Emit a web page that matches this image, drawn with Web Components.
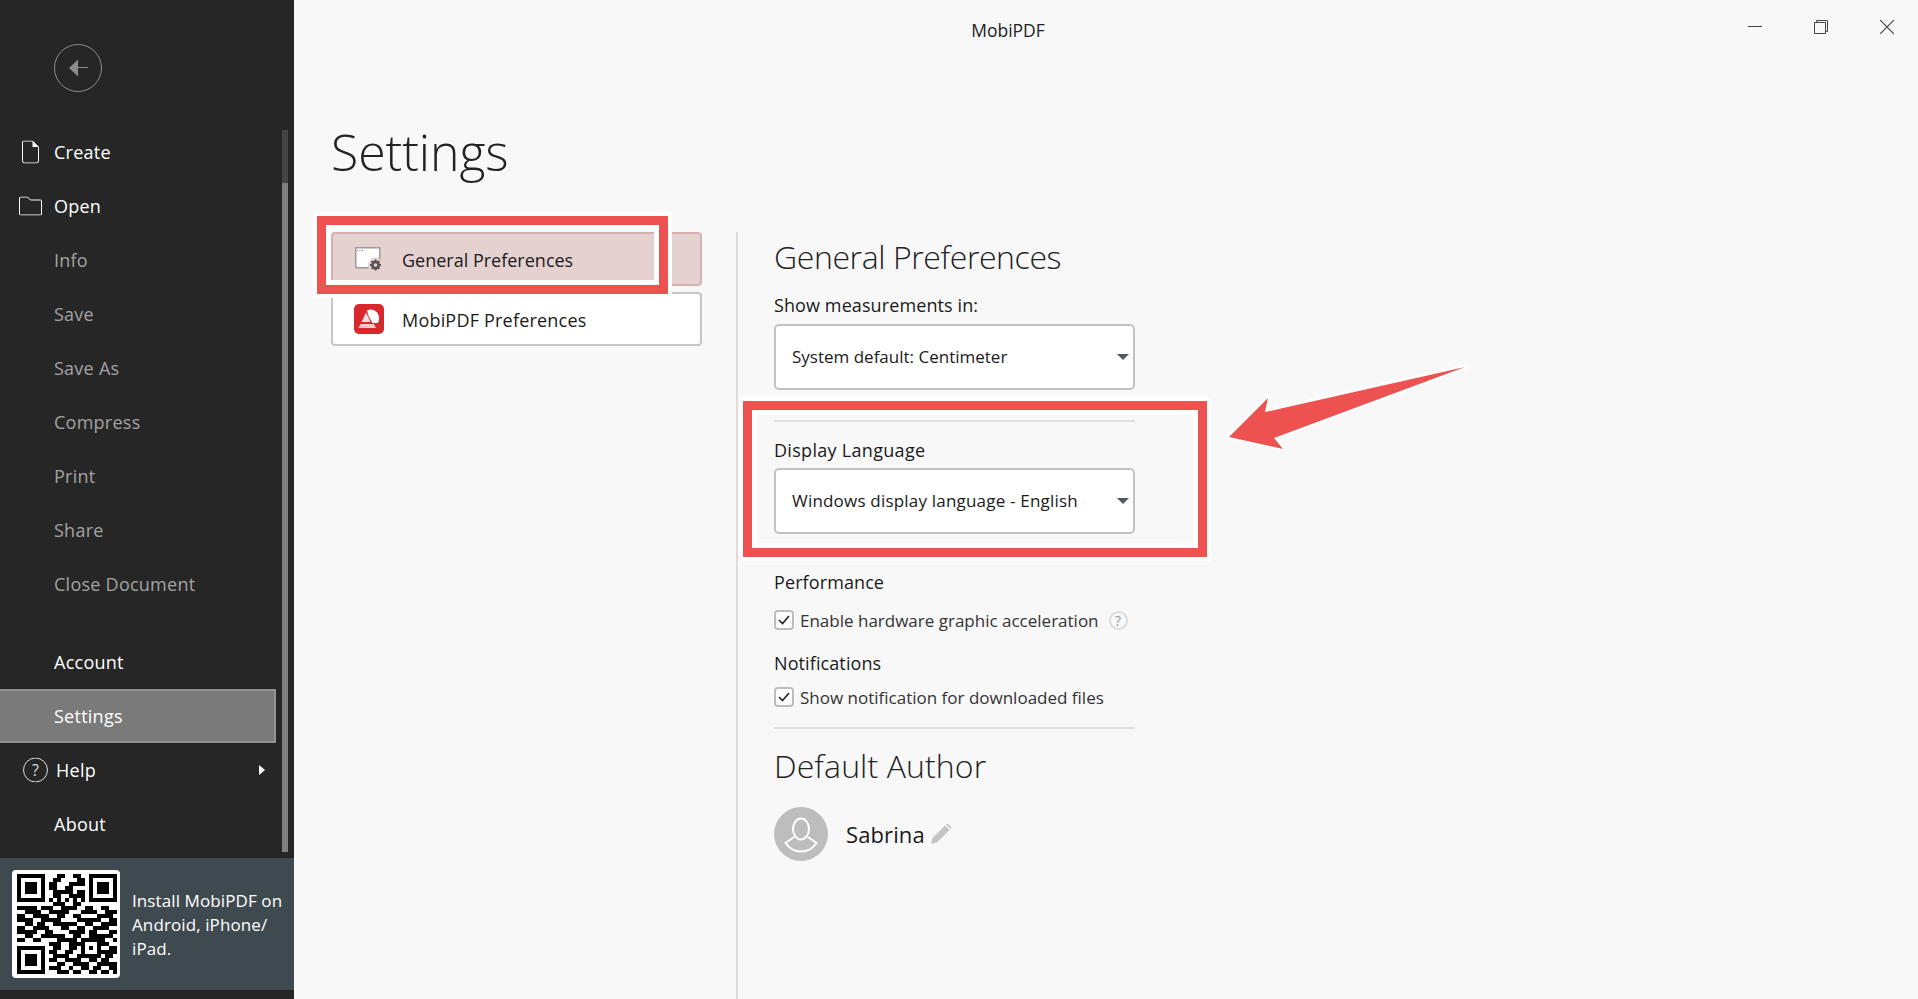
<!DOCTYPE html>
<html>
<head>
<meta charset="utf-8">
<title>MobiPDF</title>
<style>
  html, body { margin: 0; height: 100%; overflow: hidden; }
  body { font-family: "Open Sans", "Noto Sans", sans-serif; }
</style>
</head>
<body>
<settings-app></settings-app>
<script>
const FONT = '"Open Sans", "Noto Sans", sans-serif';

class NavItem extends HTMLElement {
  constructor() {
    super();
    this.attachShadow({ mode: 'open' }).innerHTML = `
      <style>
        :host { display: flex; align-items: center; height: 54px; box-sizing: border-box; padding-left: 54px; position: relative; color: #fff; font-size: 18px; letter-spacing: .25px; }
        :host([dim]) { color: #a3a3a3; }
        :host([active]) { background: #7a7a7a; border: 2px solid #929292; border-left: 0; width: 276px; }
        .icon { position: absolute; left: 17px; top: 50%; transform: translateY(-50%); display: flex; }
      </style>
      <span class="icon"><slot name="icon"></slot></span>
      <slot></slot>
      <slot name="after"></slot>`;
  }
}
customElements.define('nav-item', NavItem);

const QR = [
  '1111111000110011001111111',
  '1000001001100001101000001',
  '1011101011000111101011101',
  '1011101011001100001011101',
  '1011101001111101101011101',
  '1000001001100111101000001',
  '1111111010101010101111111',
  '0000000001110011000000000',
  '1111101110011110011001100',
  '0011110011111000111100111',
  '1100111100110011000011110',
  '1111001111100001111110011',
  '0011011001111110011001111',
  '1100111100011001100111100',
  '1111100110000111101100011',
  '0011001111110011001111110',
  '1100110000111110111111001',
  '0000000011100111100011100',
  '1111111001100110101010011',
  '1000001011001100100011111',
  '1011101001111001111110110',
  '1011101011001111001101100',
  '1011101000110011110011111',
  '1000001011100100110110011',
  '1111111000111011001101101'
];

class QrCode extends HTMLElement {
  constructor() {
    super();
    let d = '';
    QR.forEach((row, y) => {
      [...row].forEach((c, x) => { if (c === '1') d += `M${x} ${y}h1v1h-1z`; });
    });
    this.attachShadow({ mode: 'open' }).innerHTML = `
      <style>
        :host { display: block; width: 108px; height: 108px; box-sizing: border-box; padding: 4px 0 0 5px; background: #fff; border-radius: 4px; flex: none; }
        svg { display: block; }
      </style>
      <svg width="100" height="100" viewBox="0 0 25 25" shape-rendering="crispEdges"><path d="${d}" fill="#000"/></svg>`;
  }
}
customElements.define('qr-code', QrCode);

class SideBar extends HTMLElement {
  constructor() {
    super();
    this.attachShadow({ mode: 'open' }).innerHTML = `
      <style>
        :host { display: flex; flex-direction: column; width: 294px; flex: none; height: 999px; background: #262626; font-family: ${FONT}; position: relative; }
        .back { padding: 44px 0 0 54px; height: 81px; }
        .items { flex: none; height: 733px; }
        .gap { height: 24px; }
        .track { position: absolute; left: 282px; top: 130px; width: 6px; height: 53px; background: #444; }
        .thumb { position: absolute; left: 282px; top: 183px; width: 6px; height: 669px; background: #808080; }
        .promo { height: 132px; background: #3f4a50; display: flex; align-items: center; gap: 12px; padding-left: 12px; color: #fff; font-size: 17px; line-height: 24px; letter-spacing: .1px; box-sizing: border-box; }
        .promo span { width: 166px; padding-top: 1px; }
      </style>
      <div class="back">
        <svg width="48" height="48" viewBox="0 0 48 48" fill="none">
          <circle cx="24" cy="24" r="23.5" stroke="#8c8c8c"/>
          <path d="M15 24l9-8.500v17z" fill="#8c8c8c"/>
          <path d="M23 23.500h11" stroke="#8c8c8c"/>
        </svg>
      </div>
      <div class="items">
        <nav-item>Create
          <svg slot="icon" width="17" height="23" viewBox="0 0 17 23" fill="none" style="margin-left:5px"><path d="M1.500.5H10.500L16.500 6.500V20.500a2 2 0 0 1-2 2H2.500a2 2 0 0 1-2-2V1.500a1 1 0 0 1 1-1z" stroke="#fff"/><path d="M10.500.5L16.500 6.500H10.500z" fill="#fff"/></svg>
        </nav-item>
        <nav-item>Open
          <svg slot="icon" width="23" height="19" viewBox="0 0 23 19" fill="none" style="margin-left:2px"><path d="M1.500.5H8.500L11.500 3.500H21.500a1 1 0 0 1 1 1V17.500a1 1 0 0 1-1 1H1.500a1 1 0 0 1-1-1V1.500a1 1 0 0 1 1-1z" stroke="#fff"/></svg>
        </nav-item>
        <nav-item dim>Info</nav-item>
        <nav-item dim>Save</nav-item>
        <nav-item dim>Save As</nav-item>
        <nav-item dim>Compress</nav-item>
        <nav-item dim>Print</nav-item>
        <nav-item dim>Share</nav-item>
        <nav-item dim>Close Document</nav-item>
        <div class="gap"></div>
        <nav-item>Account</nav-item>
        <nav-item active>Settings</nav-item>
        <nav-item style="padding-left:56px">Help
          <svg slot="icon" width="25" height="25" viewBox="0 0 25 25" fill="none" style="margin-left:6px"><circle cx="12.500" cy="12.500" r="12" stroke="#ddd"/><text x="12.500" y="18" text-anchor="middle" font-size="16" fill="#ddd" font-family="Open Sans">?</text></svg>
          <i slot="after" style="position:absolute;right:29px;top:50%;margin-top:-5px;width:0;height:0;border-left:6px solid #fff;border-top:5.500px solid transparent;border-bottom:5.500px solid transparent"></i>
        </nav-item>
        <nav-item>About</nav-item>
      </div>
      <div class="promo"><qr-code></qr-code><span>Install MobiPDF on Android, iPhone/ iPad.</span></div>
      <i class="track"></i><i class="thumb"></i>`;
  }
}
customElements.define('side-bar', SideBar);

class TitleBar extends HTMLElement {
  constructor() {
    super();
    this.attachShadow({ mode: 'open' }).innerHTML = `
      <style>
        :host { display: flex; height: 60px; align-items: flex-start; color: #222; }
        .title { flex: 1; text-align: center; font-size: 17.500px; line-height: 60px; }
        .btns { display: flex; margin-right: -2px; }
        .btns div { width: 66px; height: 54px; display: flex; align-items: center; justify-content: center; }
      </style>
      <div class="title">MobiPDF</div>
      <div class="btns">
        <div><svg width="14" height="14" viewBox="0 0 14 14"><path d="M0 6.500h14" stroke="#444"/></svg></div>
        <div><svg width="14" height="14" viewBox="0 0 14 14" fill="none"><path d="M.5 2.500h11v11H.5z M2.500 2.500V.5h11v11h-2" stroke="#444"/></svg></div>
        <div><svg width="14" height="14" viewBox="0 0 14 14"><path d="M0 0l14 14M14 0L0 14" stroke="#444" stroke-width="1.200"/></svg></div>
      </div>`;
  }
}
customElements.define('title-bar', TitleBar);

class PrefTab extends HTMLElement {
  constructor() {
    super();
    this.attachShadow({ mode: 'open' }).innerHTML = `
      <style>
        :host { display: flex; align-items: center; box-sizing: border-box; width: 371px; height: 54px; border: 2px solid #c6c6c6; border-radius: 4px; background: #fff; font-size: 18px; color: #1a1a1a; }
        :host([selected]) { background: #e6d1d1; border-color: #d9b0b0; }
        .icon { width: 69px; padding-left: 22px; box-sizing: border-box; display: flex; flex: none; }
        .text { padding-top: 2px; }
      </style>
      <span class="icon"><slot name="icon"></slot></span>
      <span class="text"><slot></slot></span>`;
  }
}
customElements.define('pref-tab', PrefTab);

class DropDown extends HTMLElement {
  constructor() {
    super();
    this.attachShadow({ mode: 'open' }).innerHTML = `
      <style>
        :host { display: flex; align-items: center; box-sizing: border-box; width: 361px; height: 66px; padding: 0 0 2px 16px; background: #fff; border: 2px solid #c2c2c2; border-radius: 5px; position: relative; font-size: 17px; color: #1a1a1a; }
        i { position: absolute; right: 4px; top: 28px; border-top: 6px solid #4d5a66; border-left: 6px solid transparent; border-right: 6px solid transparent; }
      </style>
      <slot></slot><i></i>`;
  }
}
customElements.define('drop-down', DropDown);

class CheckRow extends HTMLElement {
  constructor() {
    super();
    this.attachShadow({ mode: 'open' }).innerHTML = `
      <style>
        :host { display: flex; align-items: center; gap: 6px; height: 28px; font-size: 17px; color: #333; }
        .box { width: 16px; height: 16px; border: 2px solid #bdbdbd; border-radius: 4px; background: #fff; display: flex; align-items: center; justify-content: center; flex: none; }
      </style>
      <span class="box"><svg width="12" height="10" viewBox="0 0 12 10" fill="none"><path d="M1 5l3.500 3.500L11 1" stroke="#222" stroke-width="1.600"/></svg></span>
      <slot></slot>
      <slot name="after"></slot>`;
  }
}
customElements.define('check-row', CheckRow);

class GeneralPane extends HTMLElement {
  constructor() {
    super();
    this.attachShadow({ mode: 'open' }).innerHTML = `
      <style>
        :host { display: block; width: 361px; padding-left: 36px; border-left: 2px solid #dcdcdc; color: #1a1a1a; flex: none; }
        h2 { margin: 0; font-weight: 300; font-size: 32px; line-height: 44px; letter-spacing: -.4px; color: #222; }
        .label { font-size: 18px; line-height: 24px; letter-spacing: .1px; }
        hr { border: 0; border-top: 2px solid #e0e0e0; margin: 0; }
        .author { display: flex; align-items: center; margin-top: 19px; font-size: 22px; letter-spacing: .1px; }
      </style>
      <h2 style="margin-top:3px">General Preferences</h2>
      <div class="label" style="margin-top:14px">Show measurements in:</div>
      <drop-down style="margin-top:7px">System default: Centimeter</drop-down>
      <hr style="margin-top:30px">
      <div class="label" style="margin-top:16px;letter-spacing:.3px">Display Language</div>
      <drop-down style="margin-top:6px;letter-spacing:.2px">Windows display language - English</drop-down>
      <div class="label" style="margin-top:36px">Performance</div>
      <check-row style="margin-top:12px">Enable hardware graphic acceleration<span slot="after" style="box-sizing:border-box;width:19px;height:19px;border:2px solid #dcdcdc;border-radius:50%;color:#9a9a9a;font-size:14px;line-height:15px;text-align:center;margin-left:4px">?</span></check-row>
      <div class="label" style="margin-top:17px">Notifications</div>
      <check-row style="margin-top:8px">Show notification for downloaded files</check-row>
      <hr style="margin-top:16px">
      <h2 style="margin-top:15px;letter-spacing:.1px">Default Author</h2>
      <div class="author">
        <svg width="54" height="54" viewBox="0 0 54 54" fill="none">
          <circle cx="27" cy="27" r="27" fill="#bdbdbd"/>
          <ellipse cx="27" cy="22" rx="8" ry="10.500" stroke="#fff" stroke-width="2"/>
          <path d="M20 30l-8.500 6c4 6 9.500 8.500 15.500 8.500s11.500-2.500 15.500-8.500l-8.500-6" stroke="#fff" stroke-width="2"/>
        </svg>
        <span style="margin-left:18px">Sabrina</span>
        <svg width="22" height="22" viewBox="0 0 22 22" style="margin-left:5px"><path d="M1 21l1.500-6L15 2.500l4.500 4.500L7 19.500z M16 1.500l1.500-1 4 4-1 1.500z" fill="#c4c4c4"/></svg>
      </div>`;
  }
}
customElements.define('general-pane', GeneralPane);

class MarkBox extends HTMLElement {
  constructor() {
    super();
    this.attachShadow({ mode: 'open' }).innerHTML = `
      <style>
        :host { position: absolute; box-sizing: border-box; border: 9px solid #ee5250; outline: 4px solid #fff; pointer-events: none; }
        i { position: absolute; inset: 0; border: 5px solid #fff; }
      </style><i></i>`;
  }
}
customElements.define('mark-box', MarkBox);

class SettingsApp extends HTMLElement {
  constructor() {
    super();
    this.attachShadow({ mode: 'open' }).innerHTML = `
      <style>
        :host { display: flex; width: 1918px; height: 999px; background: #f8f8f8; font-family: ${FONT}; position: relative; overflow: hidden; }
        main { flex: 1; display: flex; flex-direction: column; min-width: 0; }
        h1 { margin: 56px 0 0 37px; font-weight: 300; font-size: 50px; line-height: 72px; letter-spacing: -.1px; color: #222; }
        .body { display: flex; flex: 1; margin: 44px 0 0 37px; gap: 34px; }
        .tabs { display: flex; flex-direction: column; gap: 6px; }
      </style>
      <side-bar></side-bar>
      <main>
        <title-bar></title-bar>
        <h1>Settings</h1>
        <div class="body">
          <div class="tabs">
            <pref-tab selected>General Preferences
              <svg slot="icon" width="28" height="25" viewBox="0 0 28 25" fill="none">
                <path d="M.75.75h24v20h-24z" fill="#fff" stroke="#9a9a9a" stroke-width="1.500"/>
                <path d="M2 3.500h1M4.500 3.500h1M7 3.500h1" stroke="#777"/>
                <circle cx="20.500" cy="18" r="7.500" fill="#e6d1d1"/>
                <circle cx="20.500" cy="18" r="4.500" fill="#555"/>
                <path d="M20.500 12.500v11M15 18h11M16.600 14.100l7.800 7.800M24.400 14.100l-7.800 7.800" stroke="#555" stroke-width="2"/>
                <circle cx="20.500" cy="18" r="1.800" fill="#e6d1d1"/>
              </svg>
            </pref-tab>
            <pref-tab><span style="letter-spacing:.2px">MobiPDF Preferences</span>
              <svg slot="icon" width="30" height="30" viewBox="0 0 30 30" style="margin-left:-1px">
                <rect width="30" height="30" rx="5" fill="#d9272e"/>
                <path d="M13 6.500C18 4 24 7 25 13C25.500 16 24.500 18 23.500 19L18.500 19L14.500 12z" fill="#fff"/>
                <path d="M12 8.500L16.500 18H7.500z" fill="#fbdcdc"/>
                <path d="M6.500 20H20L22 24H4.500z" fill="#f6c9c9"/>
              </svg>
            </pref-tab>
          </div>
          <general-pane></general-pane>
        </div>
      </main>
      <mark-box style="left:317px;top:216px;width:351px;height:78px"></mark-box>
      <mark-box style="left:743px;top:401px;width:464px;height:156px"></mark-box>
      <svg style="position:absolute;left:1220px;top:358px" width="260" height="100" viewBox="1220 358 260 100">
        <path d="M1229 437L1268 398L1265 412L1465 367L1274 438L1283 449z" fill="#ee5250" stroke="#fff" stroke-width="5" stroke-linejoin="round" paint-order="stroke"/>
      </svg>`;
  }
}
customElements.define('settings-app', SettingsApp);
</script>
</body>
</html>
